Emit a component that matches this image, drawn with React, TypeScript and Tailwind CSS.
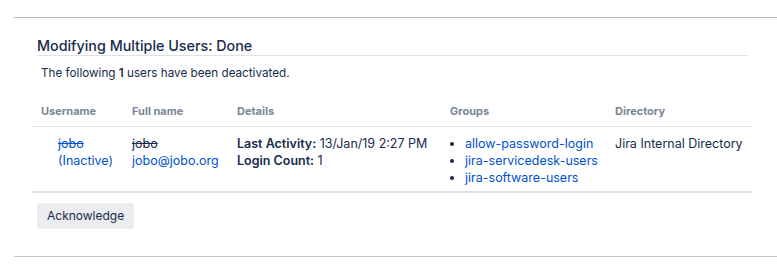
const groups = ["allow-password-login", "jira-servicedesk-users", "jira-software-users"];

export default function App() {
  return (
    <div className="w-[777px] h-[272px] bg-white pl-[14px] pt-[17px] text-[#172b4d] font-['Inter','Liberation_Sans',sans-serif]">
      <div className="border-t border-[#b3bac5] pt-[20px] pl-[23px] pr-[29px]">
        <h2 className="text-[14.3px] leading-[16px] font-medium border-b border-[#dfe1e6] pb-[1px] text-[#172b4d]">
          Modifying Multiple Users: Done
        </h2>
        <p className="text-[11.7px] leading-[16px] mt-[9px] pl-[4px]">
          The following <strong className="font-semibold">1</strong> users have been deactivated.
        </p>

        <table className="ml-[-5px] mt-[20px] w-[720px] text-[12.5px] leading-[17px] border-collapse table-fixed">
          <colgroup>
            <col className="w-[91px]" />
            <col className="w-[105px]" />
            <col className="w-[213px]" />
            <col className="w-[165px]" />
            <col className="w-[146px]" />
          </colgroup>
          <thead>
            <tr className="border-b border-[#dfe1e6]">
              <th className="text-left text-[11px] font-bold text-[#7a869a] pl-[9px] pt-[2px] pb-[6px]">Username</th>
              <th className="text-left text-[11px] font-bold text-[#7a869a] pl-[9px] pt-[2px] pb-[6px]">Full name</th>
              <th className="text-left text-[11px] font-bold text-[#7a869a] pl-[9px] pt-[2px] pb-[6px]">Details</th>
              <th className="text-left text-[11px] font-bold text-[#7a869a] pl-[9px] pt-[2px] pb-[6px]">Groups</th>
              <th className="text-left text-[11px] font-bold text-[#7a869a] pl-[9px] pt-[2px] pb-[6px]">Directory</th>
            </tr>
          </thead>
          <tbody>
            <tr className="border-b-2 border-[#dfe1e6] align-top">
              <td className="pl-[26px] pt-[8px] pb-[5px] text-[#0052cc]">
                <div className="line-through">jobo</div>
                <div>(Inactive)</div>
              </td>
              <td className="pl-[9px] pt-[8px] pb-[5px]">
                <div className="line-through">jobo</div>
                <div className="text-[#0052cc]">jobo@jobo.org</div>
              </td>
              <td className="pl-[9px] pt-[8px] pb-[5px]">
                <div>
                  <strong className="font-semibold">Last Activity:</strong> 13/Jan/19 2:27 PM
                </div>
                <div>
                  <strong className="font-semibold">Login Count:</strong> 1
                </div>
              </td>
              <td className="pl-[9px] pt-[8px] pb-[5px]">
                <ul className="flex flex-col">
                  {groups.map((g) => (
                    <li key={g} className="flex items-center">
                      <span className="w-[4px] h-[4px] rounded-full bg-[#172b4d] mr-[11px]" />
                      <span className="text-[#0052cc]">{g}</span>
                    </li>
                  ))}
                </ul>
              </td>
              <td className="pl-[9px] pt-[8px] pb-[5px]">Jira Internal Directory</td>
            </tr>
          </tbody>
        </table>

        <button className="mt-[10px] h-[26px] px-[10px] rounded-[3px] bg-[#ebecf0] text-[12px] text-[#172b4d]">
          Acknowledge
        </button>
      </div>
      <div className="mt-[27px] border-t border-[#c1c7d0]" />
    </div>
  );
}
